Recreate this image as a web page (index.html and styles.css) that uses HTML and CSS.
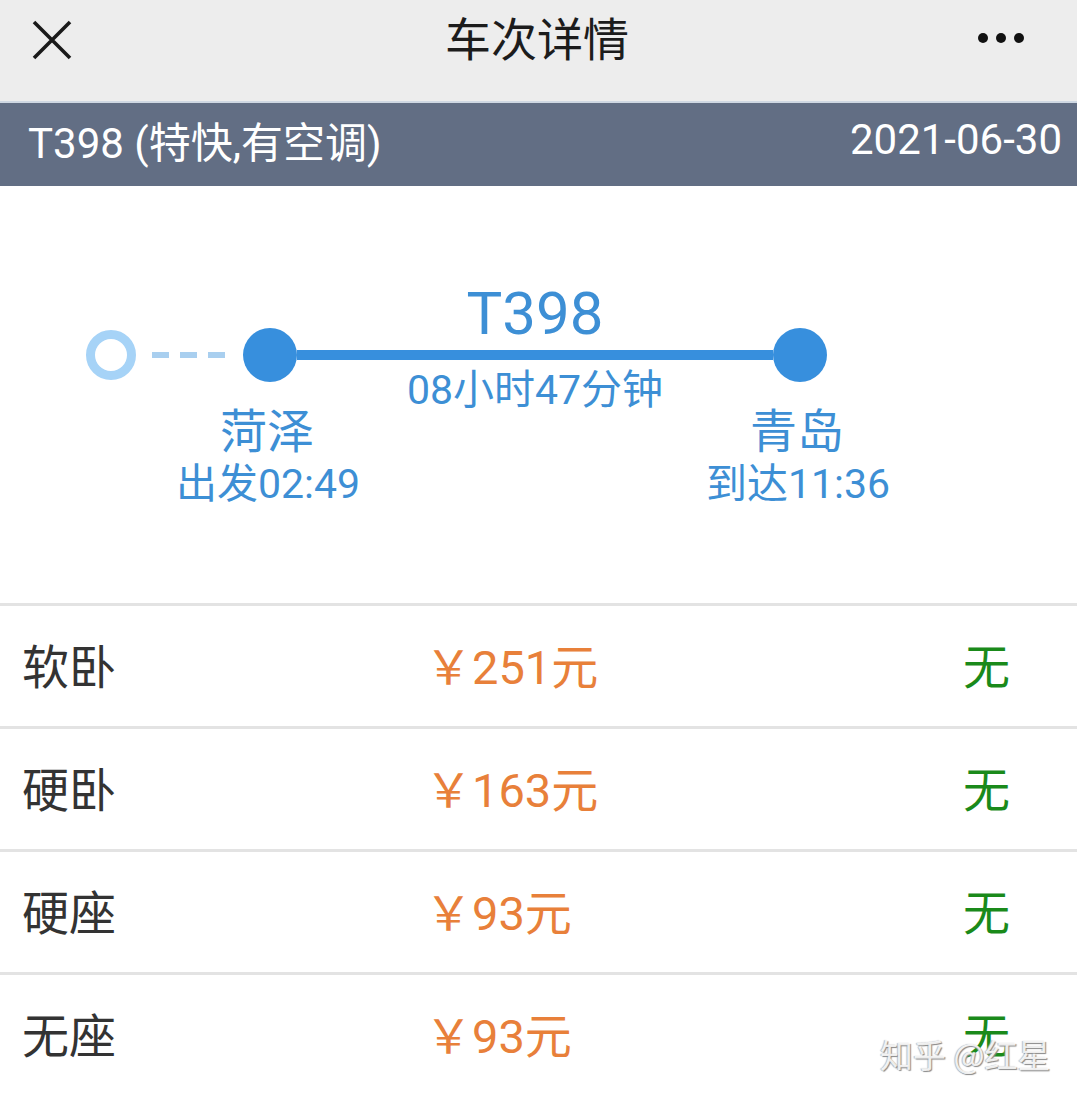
FILE: index.html
```html
<!DOCTYPE html>
<html lang="zh-CN">
<head>
    <meta charset="UTF-8">
    <meta name="viewport" content="width=device-width, initial-scale=1.0">
    <title>车次详情</title>
    <link rel="stylesheet" href="styles.css">
</head>
<body>
    <header class="topbar">
        <svg class="close-icon" width="40" height="40" viewBox="0 0 40 40">
            <path d="M2 2 L38 38 M38 2 L2 38" stroke="#1a1a1a" stroke-width="3.6" fill="none"/>
        </svg>
        <h1 class="title">车次详情</h1>
        <svg class="more-icon" width="50" height="12" viewBox="0 0 50 12">
            <circle cx="7" cy="6" r="5" fill="#111"/>
            <circle cx="25" cy="6" r="5" fill="#111"/>
            <circle cx="43" cy="6" r="5" fill="#111"/>
        </svg>
    </header>

    <div class="train-bar">
        <span>T398 (特快,有空调)</span>
        <span>2021-06-30</span>
    </div>

    <section class="route-panel">
        <div class="route">
            <div class="origin">
                <span class="ring"></span>
                <span class="dashes"></span>
            </div>
            <div class="stop">
                <span class="dot"></span>
                <span class="stop-name">菏泽</span>
                <span class="stop-time">出发02:49</span>
            </div>
            <div class="leg">
                <div class="train-no">T398</div>
                <div class="bar"></div>
                <div class="duration">08小时47分钟</div>
            </div>
            <div class="stop">
                <span class="dot"></span>
                <span class="stop-name">青岛</span>
                <span class="stop-time">到达11:36</span>
            </div>
        </div>
    </section>

    <ul class="seats">
        <li class="seat-row"><span class="seat-type">软卧</span><span class="price">￥251元</span><span class="left">无</span></li>
        <li class="seat-row"><span class="seat-type">硬卧</span><span class="price">￥163元</span><span class="left">无</span></li>
        <li class="seat-row"><span class="seat-type">硬座</span><span class="price">￥93元</span><span class="left">无</span></li>
        <li class="seat-row"><span class="seat-type">无座</span><span class="price">￥93元</span><span class="left">无</span></li>
    </ul>

    <div class="watermark">知乎 @红星</div>
</body>
</html>
```

FILE: styles.css
```css
body {
    margin: 0;
    background: #fff;
    font-family: Roboto, "Noto Sans CJK SC", sans-serif;
    width: 1077px;
    height: 1096px;
    overflow: hidden;
    position: relative;
}
.topbar {
    height: 101px;
    background: #ededed;
    border-bottom: 2px solid #cfd8e3;
    display: flex;
    align-items: flex-start;
    justify-content: space-between;
    padding: 0 51px 0 32px;
    box-sizing: content-box;
}
.close-icon {
    margin-top: 20px;
}
.title {
    margin: 0 0 0 26px;
    font-size: 46px;
    font-weight: normal;
    color: #1c1c1c;
    line-height: 80px;
}
.more-icon {
    margin-top: 32px;
}
.train-bar {
    height: 83px;
    box-sizing: border-box;
    padding: 0 15px 10px 28px;
    background: #626e84;
    color: #fff;
    font-size: 42px;
    display: flex;
    align-items: center;
    justify-content: space-between;
}
.route-panel {
    height: 417px;
}
.route {
    display: flex;
    align-items: flex-start;
    padding: 98px 250px 0 86px;
    color: #3d8fd5;
}
.origin {
    display: flex;
    align-items: center;
    margin-top: 46px;
}
.ring {
    width: 50px;
    height: 50px;
    box-sizing: border-box;
    border: 9px solid #a6d3f7;
    border-radius: 50%;
}
.dashes {
    width: 74px;
    height: 6px;
    margin: 0 17px 0 16px;
    background: repeating-linear-gradient(90deg, #a9cfef 0 17px, transparent 17px 28px);
}
.stop {
    width: 54px;
    display: flex;
    flex-direction: column;
    align-items: center;
    margin-top: 44px;
    white-space: nowrap;
}
.dot {
    width: 54px;
    height: 54px;
    border-radius: 50%;
    background: #378fdd;
}
.stop-name {
    font-size: 47px;
    line-height: 52px;
    margin-top: 24px;
    margin-right: 6px;
}
.stop-time {
    font-size: 41px;
    line-height: 44px;
    margin-top: 4px;
    margin-right: 4px;
}
.leg {
    flex: 1;
    display: flex;
    flex-direction: column;
    align-items: center;
    white-space: nowrap;
}
.train-no {
    font-size: 60px;
    line-height: 60px;
    height: 60px;
}
.bar {
    align-self: stretch;
    height: 10px;
    margin-top: 6px;
    background: #378fdd;
}
.duration {
    font-size: 41px;
    line-height: 44px;
    margin-top: 8px;
}
.seats {
    list-style: none;
    margin: 0;
    padding: 0;
}
.seat-row {
    height: 123px;
    box-sizing: border-box;
    border-top: 3px solid #e3e3e3;
    display: grid;
    grid-template-columns: 403px 1fr auto;
    align-items: center;
    padding: 0 67px 6px 22px;
    font-size: 47px;
}
.seat-type {
    color: #333;
}
.price {
    color: #e8803a;
}
.left {
    color: #1a8a1a;
}
.watermark {
    position: absolute;
    left: 880px;
    top: 1030px;
    font-size: 33px;
    color: rgba(255, 255, 255, 0.85);
    text-shadow: 1px 1px 1px #888, -1px 0 1px #bbb;
    font-family: "Noto Sans CJK SC", sans-serif;
}
```
